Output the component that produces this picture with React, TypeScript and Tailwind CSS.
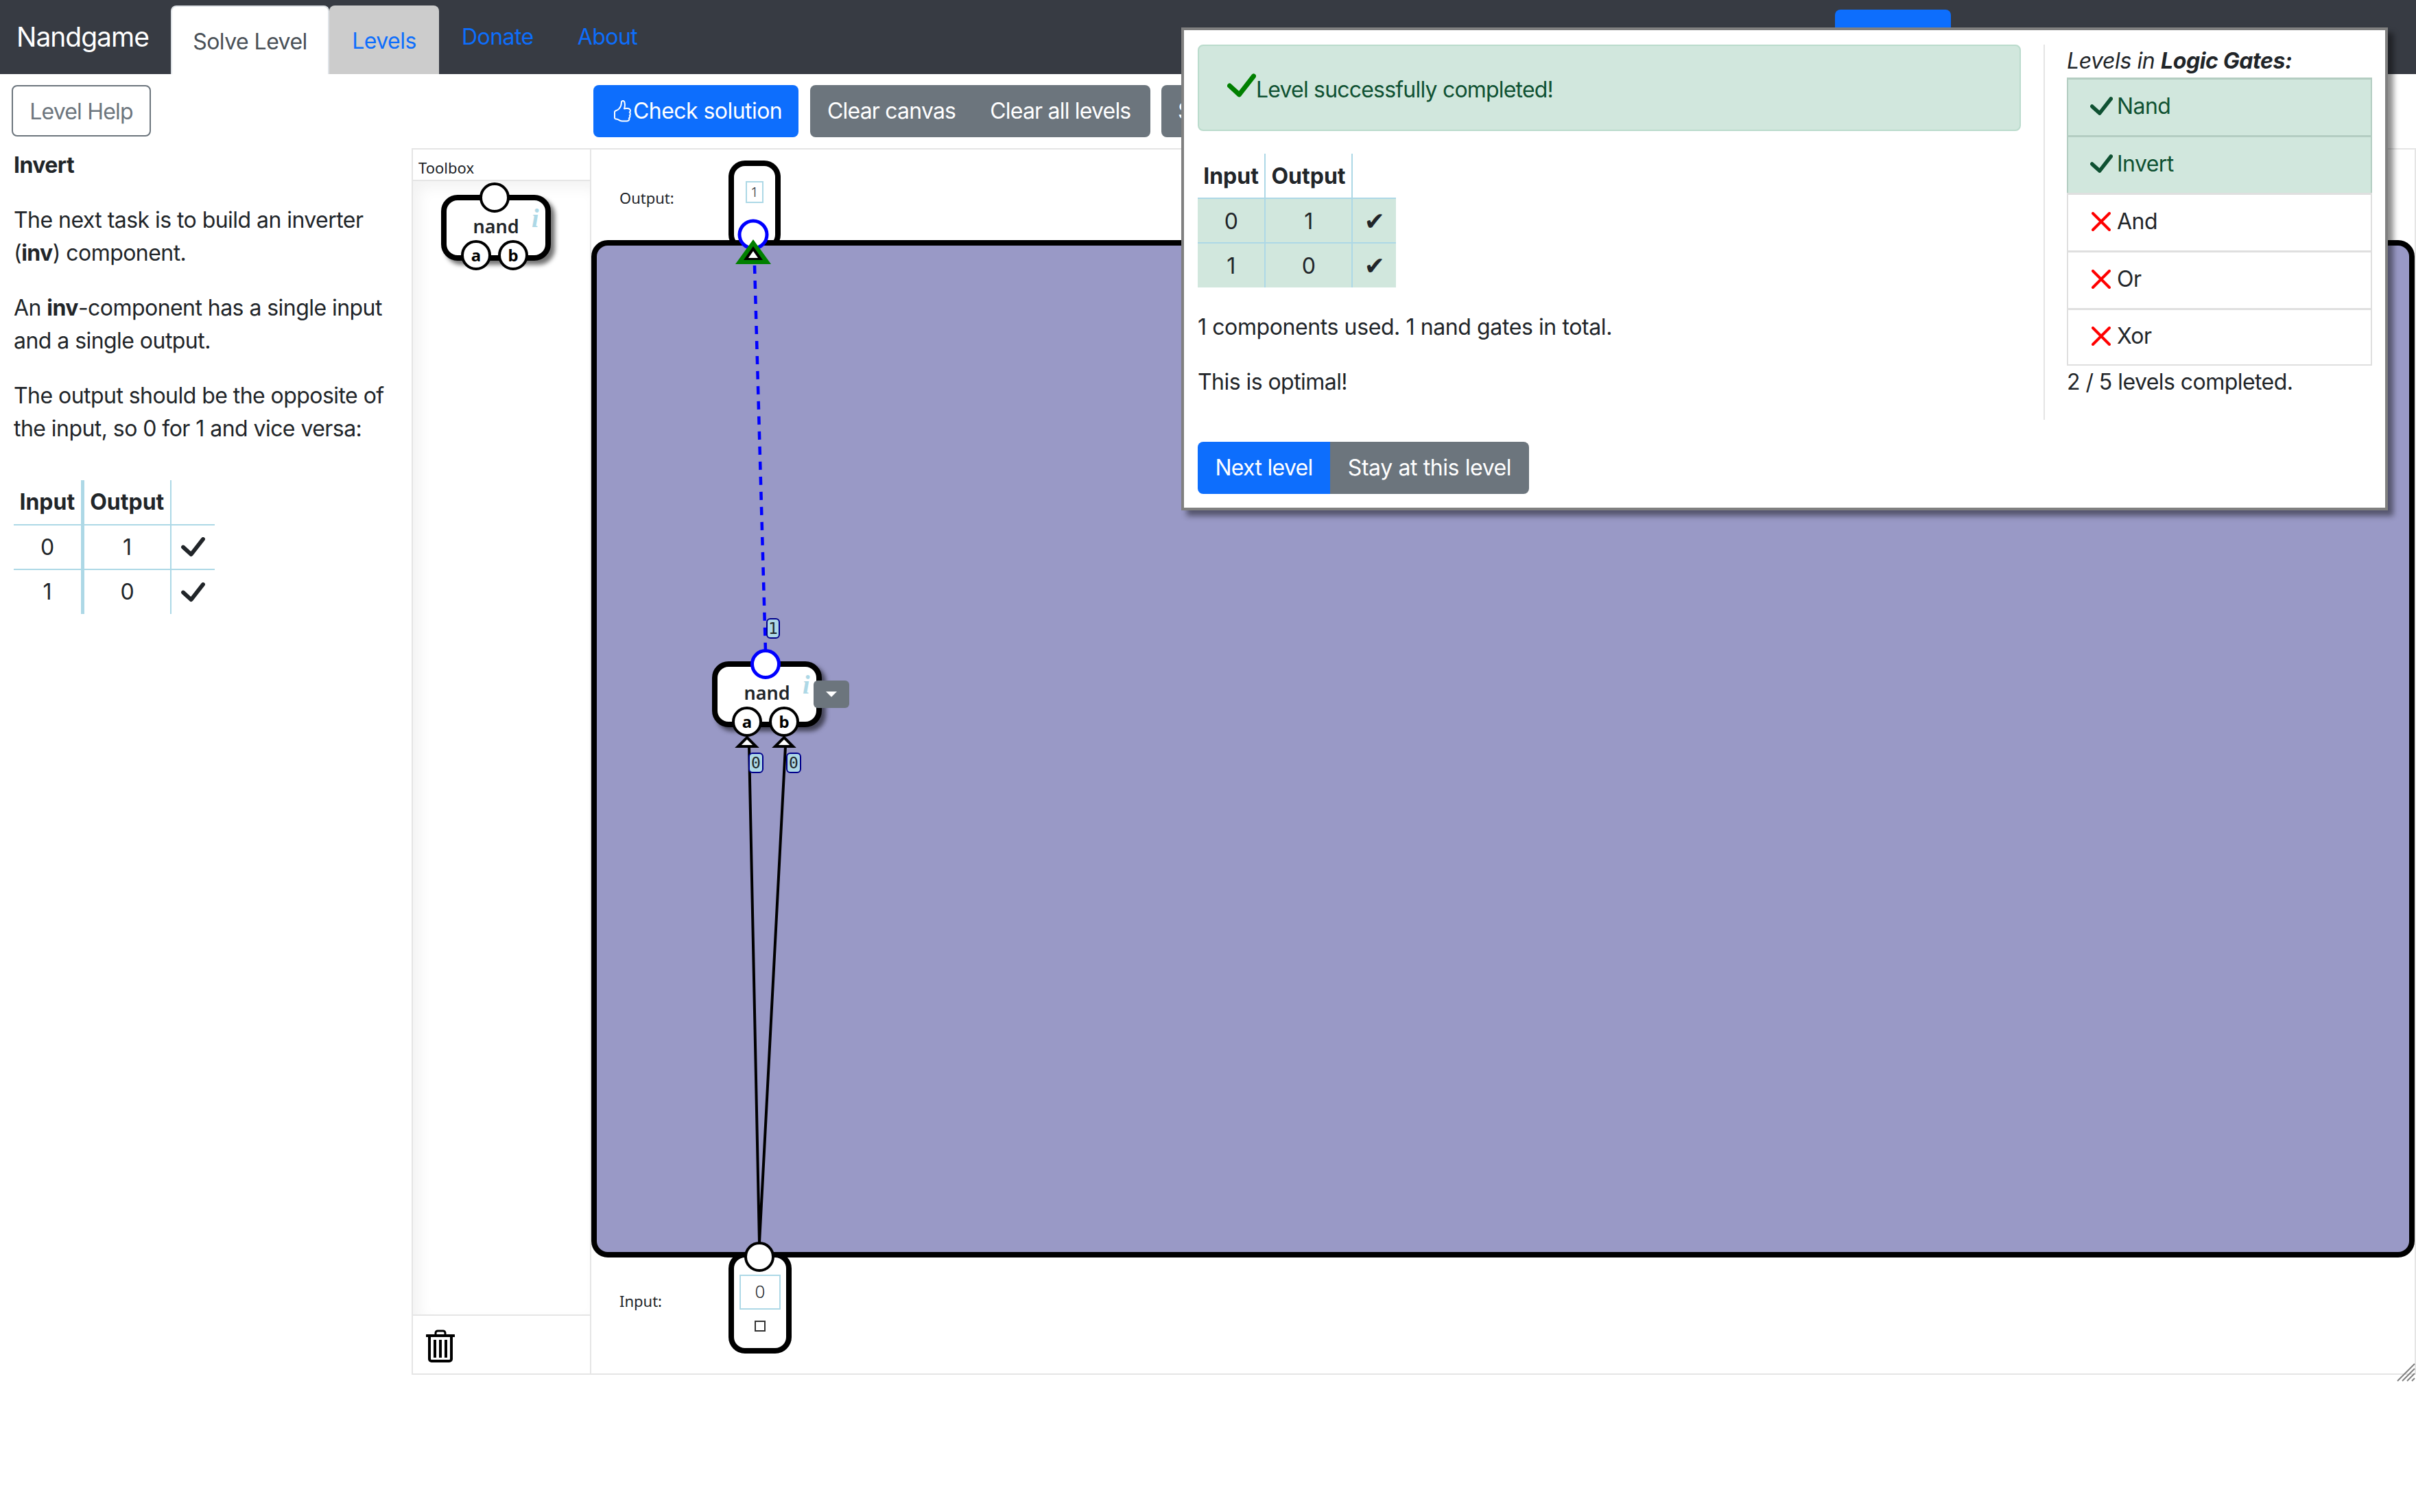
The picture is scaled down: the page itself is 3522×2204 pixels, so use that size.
import { BsHandThumbsUp } from 'react-icons/bs'

const truthRows = [
  ['0', '1'],
  ['1', '0'],
]

const levels = [
  { name: 'Nand', done: true },
  { name: 'Invert', done: true },
  { name: 'And', done: false },
  { name: 'Or', done: false },
  { name: 'Xor', done: false },
]

function Check({ className }: { className: string }) {
  return (
    <svg className={className} viewBox="0 0 36 30" fill="none">
      <path d="M3 15L15 26L33 3" stroke="currentColor" strokeWidth="6" strokeLinecap="round" strokeLinejoin="round" />
    </svg>
  )
}

function Cross() {
  return (
    <svg className="ml-[2px] h-[28px] w-[28px] text-[#ff0000]" viewBox="0 0 28 28" fill="none">
      <path d="M2 2L26 26M26 2L2 26" stroke="currentColor" strokeWidth="4" strokeLinecap="round" />
    </svg>
  )
}

function NandNode({ className, active }: { className: string; active?: boolean }) {
  return (
    <div
      className={`${className} h-[96px] w-[160px] rounded-[24px] border-8 border-black bg-white shadow-[6px_6px_6px_rgba(0,0,0,0.55)]`}
    >
      <div
        className={`absolute left-[48px] top-[-26px] h-[44px] w-[44px] rounded-full bg-white ${
          active ? 'border-[5px] border-[#0000ff]' : 'border-[4px] border-black'
        }`}
      />
      <span className="absolute left-[124px] top-[6px] font-['Liberation_Serif',serif] text-[38px] font-bold italic leading-[40px] text-[#add8e6]">
        i
      </span>
      <span className="absolute left-0 top-[18px] w-[144px] text-center font-['Noto_Sans',sans-serif] text-[27px] font-semibold leading-[40px] tracking-normal text-[#212529]">
        nand
      </span>
      <Port label="a" className="left-[21px]" />
      <Port label="b" className="left-[75px]" />
    </div>
  )
}

function Port({ label, className }: { label: string; className: string }) {
  return (
    <div
      className={`absolute top-[58px] flex h-[44px] w-[44px] items-center justify-center rounded-full border-[4px] border-black bg-white font-['Noto_Sans',sans-serif] text-[24px] font-bold tracking-normal text-black ${className}`}
    >
      {label}
    </div>
  )
}

function WireLabel({ value, className }: { value: string; className: string }) {
  return (
    <div
      className={`absolute flex h-[30px] items-center justify-center rounded-[6px] border-2 border-[#00008b] bg-[#add8e6] font-['DejaVu_Sans_Mono',monospace] text-[23px] tracking-normal text-[#212529] ${className}`}
    >
      {value}
    </div>
  )
}

function Trash() {
  return (
    <svg width="42" height="48" viewBox="0 0 42 48">
      <path d="M1 9h40" stroke="black" strokeWidth="4" strokeLinecap="round" />
      <path d="M14 8V5a3 3 0 0 1 3-3h8a3 3 0 0 1 3 3v3" fill="none" stroke="black" strokeWidth="3" />
      <path d="M5 10v33a3 3 0 0 0 3 3h26a3 3 0 0 0 3-3V10" fill="none" stroke="black" strokeWidth="4" />
      <path d="M13 15v26M21 15v26M29 15v26" stroke="black" strokeWidth="4" />
    </svg>
  )
}

function CanvasDrawing() {
  return (
    <svg
      className="absolute left-0 top-0 h-[1784px] w-[2658px] overflow-visible"
      viewBox="862 218 2658 1784"
    >
      <path d="M1100 387L1116 950" stroke="#0000ff" strokeWidth="4.5" strokeDasharray="12 10" />
      <path d="M1092 1088L1107 1812M1145 1088L1107 1812" stroke="black" strokeWidth="4" />
      <circle cx="1098" cy="342" r="20" fill="white" stroke="#0000ff" strokeWidth="5" />
      <path d="M1098 349L1124 385H1072Z" fill="#008000" />
      <path d="M1098 359L1112 379H1084Z" fill="black" />
      <path d="M1098 366L1105 376H1091Z" fill="white" />
      <path d="M1089 1075L1102 1088H1076Z" fill="white" stroke="black" strokeWidth="4" />
      <path d="M1143 1075L1156 1088H1130Z" fill="white" stroke="black" strokeWidth="4" />
      <circle cx="1107" cy="1832" r="20" fill="white" stroke="black" strokeWidth="4" />
      <path
        d="M3495 2013L3520 1988M3502 2013L3520 1995M3509 2013L3520 2002M3516 2013L3520 2009"
        stroke="#808080"
        strokeWidth="2"
      />
    </svg>
  )
}

function HelpTable() {
  return (
    <table className="mt-[51px] w-[293px] table-fixed text-center">
      <thead>
        <tr className="h-[65px] border-b-2 border-[#add8e6] font-bold tracking-normal">
          <th className="w-[100px] border-r-[5px] border-[#add8e6]">Input</th>
          <th className="w-[129px] border-r-2 border-[#add8e6]">Output</th>
          <th className="w-[64px]" />
        </tr>
      </thead>
      <tbody>
        {truthRows.map((row, i) => (
          <tr key={row[0]} className={`h-[65px] ${i === 0 ? 'border-b-2 border-[#add8e6]' : ''}`}>
            <td className="border-r-[5px] border-[#add8e6]">{row[0]}</td>
            <td className="border-r-2 border-[#add8e6]">{row[1]}</td>
            <td>
              <Check className="mx-auto h-[29px] w-[35px] text-[#212529]" />
            </td>
          </tr>
        ))}
      </tbody>
    </table>
  )
}

function ResultTable() {
  return (
    <table className="mt-[33px] w-[289px] table-fixed text-center">
      <thead>
        <tr className="h-[65px] border-b-2 border-[#add8e6] font-bold tracking-normal">
          <th className="w-[98px] border-r-2 border-[#add8e6] pt-[2px]">Input</th>
          <th className="w-[127px] border-r-2 border-[#add8e6] pt-[2px]">Output</th>
          <th className="w-[64px]" />
        </tr>
      </thead>
      <tbody>
        {truthRows.map((row, i) => (
          <tr
            key={row[0]}
            className={`h-[65px] bg-[#d1e7dd] ${i === 0 ? 'border-b-2 border-[#add8e6]' : ''}`}
          >
            <td className="border-r-2 border-[#add8e6] pt-[2px]">{row[0]}</td>
            <td className="border-r-2 border-[#add8e6] pt-[2px]">{row[1]}</td>
            <td className="pt-[2px] font-['DejaVu_Sans',sans-serif] text-[36px]">✔</td>
          </tr>
        ))}
      </tbody>
    </table>
  )
}

function SuccessPopup() {
  return (
    <div className="absolute left-[1722px] top-[40px] z-10 flex h-[704px] w-[1759px] border-4 border-[#808080] bg-white pl-[20px] pt-[21px] shadow-[8px_8px_8px_rgba(0,0,0,0.45)]">
      <div className="w-[1200px]">
        <div className="flex h-[126px] items-center rounded-[8px] border-2 border-[#badbcc] bg-[#d1e7dd] pl-[41px] text-[#0f5132]">
          <Check className="mb-[6px] h-[36px] w-[42px] shrink-0 text-[#008000]" />
          <span className="mt-[6px] tracking-[-0.8px]">Level successfully completed!</span>
        </div>
        <ResultTable />
        <p className="mt-[34px] tracking-[-0.4px]">1 components used. 1 nand gates in total.</p>
        <p className="mt-[32px]">This is optimal!</p>
        <div className="mt-[63px] flex h-[76px] text-white">
          <button className="w-[193px] rounded-l-[8px] bg-[#0d6efd] tracking-[-0.7px]">Next level</button>
          <button className="w-[290px] rounded-r-[8px] bg-[#6c757d] tracking-[-0.4px]">Stay at this level</button>
        </div>
      </div>
      <div className="ml-[33px] h-[547px] w-[478px] border-l-2 border-[#e5e5e5] pl-[32px]">
        <p className="italic tracking-[-0.4px]">
          Levels in <b>Logic Gates:</b>
        </p>
        <ul className="w-[445px]">
          {levels.map((level) => (
            <li
              key={level.name}
              className={`flex h-[84px] items-center border-2 border-b-0 border-t-[3px] pb-[3px] pl-[32px] last:border-b-2 ${
                level.done
                  ? 'border-[#b4cdc2] bg-[#d1e7dd] text-[#0f5132]'
                  : 'border-[#dfdfdf] text-[#212529]'
              }`}
            >
              <span className="flex w-[39px] shrink-0 items-center">
                {level.done ? <Check className="h-[28px] w-[33px] text-[#0f5132]" /> : <Cross />}
              </span>
              {level.name}
            </li>
          ))}
        </ul>
        <p>2 / 5 levels completed.</p>
      </div>
    </div>
  )
}

export default function App() {
  return (
    <div className="relative h-[2204px] w-[3522px] overflow-hidden bg-white font-['Inter','Liberation_Sans',sans-serif] text-[32px] leading-[48px] tracking-[-0.55px] text-[#212529]">
      <nav className="flex h-[108px] items-end bg-[#373b43]">
        <a className="mb-[24px] ml-[24px] w-[225px] text-[39px] leading-[60px] tracking-[-1px] text-white">
          Nandgame
        </a>
        <a className="flex h-[100px] w-[231px] items-center justify-center rounded-t-[8px] border-x-2 border-t-2 border-[#dee2e6] bg-white pt-[4px] text-[#495057]">
          Solve Level
        </a>
        <a className="flex h-[100px] w-[160px] items-center justify-center rounded-t-[8px] bg-[#cccccc] pt-[4px] text-[#0d6efd]">
          Levels
        </a>
        <a className="mb-[30px] ml-[33px] text-[#0d6efd]">Donate</a>
        <a className="mb-[30px] ml-[64px] text-[#0d6efd]">About</a>
        <div className="mb-[18px] ml-auto mr-[678px] h-[76px] w-[169px] rounded-[8px] bg-[#0d6efd]" />
      </nav>

      <div className="flex h-[108px] items-start pl-[17px] pt-[16px]">
        <button className="h-[75px] w-[203px] rounded-[8px] border-2 border-[#6c757d] pt-[2px] tracking-[-0.8px] text-[#6c757d]">
          Level Help
        </button>
        <button className="ml-[645px] flex h-[76px] w-[299px] items-center rounded-[8px] bg-[#0d6efd] pl-[26px] text-white">
          <BsHandThumbsUp className="h-[32px] w-[32px] shrink-0" />
          <span>Check solution</span>
        </button>
        <div className="ml-[17px] flex h-[76px] w-[496px] items-center rounded-[8px] bg-[#6c757d] tracking-[-0.8px] text-white">
          <span className="ml-[25px]">Clear canvas</span>
          <span className="ml-[50px]">Clear all levels</span>
        </div>
        <button className="ml-[16px] h-[76px] w-[300px] rounded-[8px] bg-[#6c757d] pl-[24px] text-left text-white">
          Show
        </button>
      </div>

      <div className="flex items-start">
        <aside className="w-[600px] pl-[20px] pt-px">
          <h2 className="font-bold">Invert</h2>
          <p className="mt-[32px] w-[560px]">
            The next task is to build an inverter (<b>inv</b>) component.
          </p>
          <p className="mt-[32px] w-[560px]">
            An <b>inv</b>-component has a single input and a single output.
          </p>
          <p className="mt-[32px] w-[560px]">
            The output should be the opposite of the input, so 0 for 1 and vice versa:
          </p>
          <HelpTable />
        </aside>

        <section className="flex h-[1788px] w-[260px] flex-col border-y-2 border-l-2 border-[#e5e5e5]">
          <div className="h-[46px] border-b-2 border-[#e5e5e5] pl-[8px] font-['Noto_Sans',sans-serif] text-[22px] leading-[52px] tracking-normal text-[#212529]">
            Toolbox
          </div>
          <div className="flex-1 pl-[41px] pt-[20px] shadow-[inset_10px_10px_20px_rgba(0,0,0,0.05)]">
            <NandNode className="relative" />
          </div>
          <div className="flex h-[86px] items-center border-t-2 border-[#e5e5e5] pl-[19px] pt-[4px]">
            <Trash />
          </div>
        </section>

        <main className="relative h-[1788px] w-[2662px] border-2 border-[#e5e5e5] font-['Noto_Sans',sans-serif] text-[22px] leading-[30px] tracking-normal">
          <span className="absolute left-[41px] top-[55px]">Output:</span>
          <div className="absolute left-[200px] top-[16px] h-[132px] w-[76px] rounded-[24px] border-8 border-black bg-white">
            <div className="ml-[17px] mt-[22px] flex h-[32px] w-[26px] items-center justify-center border-2 border-[#add8e6] text-[20px] font-light">
              1
            </div>
          </div>
          <span className="absolute left-[41px] top-[1663px]">Input:</span>
          <div className="absolute left-[200px] top-[1607px] h-[148px] w-[92px] rounded-[24px] border-8 border-black bg-white">
            <div className="ml-[8px] mt-[25px] flex h-[51px] w-[60px] items-center justify-center border-2 border-[#add8e6] pb-[4px] text-[26px] font-light">
              0
            </div>
            <div className="ml-[30px] mt-[16px] h-[16px] w-[16px] border-2 border-[#333333]" />
          </div>

          <div className="absolute left-0 top-[132px] h-[1483px] w-full rounded-[24px] border-8 border-black bg-[#9999c6]" />

          <NandNode className="absolute left-[176px] top-[746px]" active />
          <button className="absolute left-[324px] top-[774px] flex h-[40px] w-[52px] items-center justify-center rounded-[6px] bg-[#6c757d]">
            <span className="h-0 w-0 border-x-[8px] border-t-[8px] border-x-transparent border-t-white" />
          </button>

          <CanvasDrawing />

          <WireLabel value="1" className="left-[255px] top-[683px] w-[20px]" />
          <WireLabel value="0" className="left-[229px] top-[879px] w-[22px]" />
          <WireLabel value="0" className="left-[284px] top-[879px] w-[22px]" />
        </main>
      </div>

      <SuccessPopup />
    </div>
  )
}
